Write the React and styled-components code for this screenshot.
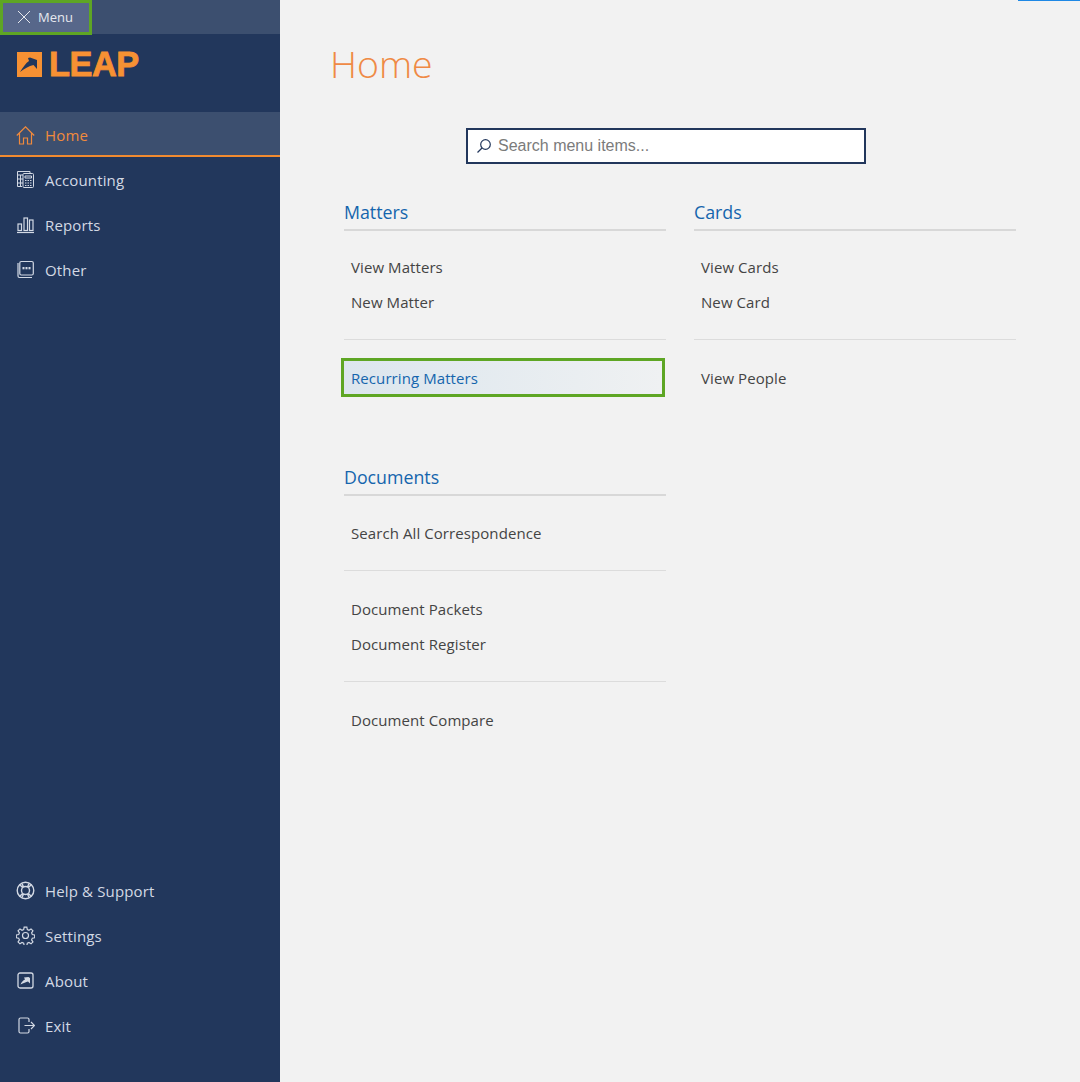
import React from "react";
import styled, { createGlobalStyle } from "styled-components";

const Global = createGlobalStyle`
  html, body { margin: 0; padding: 0; height: 100%; }
  body { background: #f2f2f2; font-family: "Open Sans", "Noto Sans", sans-serif; }
  #root { height: 100%; }
`;

const Page = styled.div`
  position: relative;
  display: flex;
  width: 1080px;
  height: 1082px;
  overflow: hidden;
  background: #f2f2f2;
`;
const Progress = styled.div`
  position: absolute;
  top: 0;
  right: 0;
  width: 62px;
  height: 1px;
  background: #1e88e5;
`;
const Sidebar = styled.aside`
  width: 280px;
  flex: none;
  display: flex;
  flex-direction: column;
  background: #22375c;
  padding-bottom: 34px;
  box-sizing: border-box;
`;
const TopBar = styled.div`
  height: 34px;
  background: #3c4f6f;
  display: flex;
`;
const MenuButton = styled.div`
  width: 92px;
  height: 35px;
  box-sizing: border-box;
  border: 3px solid #5ea624;
  background: #57678a;
  color: #e6e8ee;
  font-size: 13px;
  display: flex;
  align-items: center;
  padding: 0 0 2px 14px;
  gap: 7px;
`;
const Logo = styled.div`
  height: 78px;
  padding: 18px 0 0 17px;
  box-sizing: border-box;
  display: flex;
  align-items: flex-start;
  gap: 7px;
`;
const LogoText = styled.span`
  font-family: "Liberation Sans", sans-serif;
  font-weight: 700;
  font-size: 34.4px;
  line-height: 25px;
  height: 25px;
  color: #f79133;
  -webkit-text-stroke: 0.8px #f79133;
  letter-spacing: -0.5px;
`;
const NavList = styled.nav`
  display: flex;
  flex-direction: column;
  flex: ${(p) => (p.$grow ? 1 : "none")};
`;
const NavItem = styled.a`
  height: 45px;
  box-sizing: border-box;
  display: flex;
  align-items: center;
  padding-left: 16px;
  padding-top: ${(p) => (p.$active ? "3px" : "0")};
  gap: 10px;
  font-size: 15px;
  letter-spacing: 0.15px;
  color: ${(p) => (p.$active ? "#f08a3c" : "#d3d9e4")};
  background: ${(p) => (p.$active ? "#3c4f6f" : "transparent")};
  border-bottom: ${(p) => (p.$active ? "2px solid #f28b30" : "none")};
`;
const IconBox = styled.svg`
  width: 19px;
  height: 19px;
  flex: none;
  fill: none;
  stroke: currentColor;
  stroke-width: ${(p) => p.$stroke ?? 1.2};
`;
const Main = styled.main`
  flex: 1;
  padding: 0 64px;
  box-sizing: border-box;
`;
const Title = styled.h1`
  margin: 39px 0 0 -14px;
  font-size: 37.5px;
  line-height: 50px;
  font-weight: 300;
  color: #ef8a45;
`;
const SearchRow = styled.div`
  display: flex;
  justify-content: center;
  margin: 39px 0 0 -28px;
`;
const SearchBox = styled.div`
  width: 400px;
  height: 36px;
  box-sizing: border-box;
  border: 2px solid #22375c;
  background: #fff;
  display: flex;
  align-items: center;
  padding-left: 8px;
  gap: 6px;
  color: #7b7b7b;
  font-family: "Liberation Sans", sans-serif;
  font-size: 16px;
`;
const Columns = styled.div`
  display: grid;
  grid-template-columns: 322px 322px;
  column-gap: 28px;
  margin-top: 35px;
`;
const Column = styled.div`
  display: flex;
  flex-direction: column;
`;
const Section = styled.section`
  margin-bottom: ${(p) => p.$gap || 0}px;
`;
const SectionTitle = styled.h2`
  margin: 0;
  height: 32px;
  box-sizing: border-box;
  border-bottom: 2px solid #d8d8d8;
  color: #1565ad;
  font-size: 17.8px;
  line-height: 27px;
  font-weight: 400;
`;
const Group = styled.div`
  padding: ${(p) => p.$top ?? 20}px 0 20px;
  border-bottom: ${(p) => (p.$last ? "none" : "1px solid #dcdcdc")};
`;
const Item = styled.a`
  display: flex;
  align-items: center;
  height: ${(p) => (p.$tall ? 39 : 35)}px;
  padding-left: 7px;
  font-size: 15px;
  letter-spacing: 0.08px;
  color: #444;
`;
const FocusItem = styled(Item)`
  box-sizing: border-box;
  margin: 0 1px 0 -3px;
  padding-left: 7px;
  border: 3px solid #5ea624;
  color: #1565ad;
  background: linear-gradient(90deg, #dce6ee, #eff1f2);
`;

const HomeIcon = () => (
  <IconBox viewBox="0 0 19 19">
    <path d="M.8 9.500 9.500.8 18.200 9.500M3.500 7V18h4v-6h4v6h4V7" />
  </IconBox>
);
const CalcIcon = () => (
  <IconBox viewBox="0 0 19 19" $stroke={1}>
    <path d="M14 3V1.500H1.500v15H6M1.500 5H7M1.500 9H7M1.500 13H7M4.500 5v11" />
    <rect x="7" y="3.500" width="10.500" height="14" rx="1" />
    <path d="M9 6h6.500v2H9zM9 10.500h1.500M11.500 10.500H13M14 10.500h1.500M9 13h1.500M11.500 13H13M14 13h1.500M9 15.500h1.500M11.500 15.500H13M14 15.500h1.500" />
  </IconBox>
);
const BarsIcon = () => (
  <IconBox viewBox="0 0 19 19">
    <path d="M1 17.500h17" />
    <rect x="2" y="9" width="3.500" height="6.500" />
    <rect x="8" y="3" width="3.500" height="12.500" />
    <rect x="13.500" y="5" width="3.500" height="10.500" />
  </IconBox>
);
const OtherIcon = () => (
  <IconBox viewBox="0 0 19 19">
    <path d="M2 3v13c0 1 .5 1.500 1.500 1.500H16" />
    <rect x="3.800" y="1.500" width="13.500" height="13.500" rx="1.500" />
    <rect x="6.500" y="7" width="2" height="2.300" fill="currentColor" stroke="none" />
    <rect x="9.500" y="7" width="2" height="2.300" fill="currentColor" stroke="none" />
    <rect x="12.500" y="7" width="2" height="2.300" fill="currentColor" stroke="none" />
  </IconBox>
);
const HelpIcon = () => (
  <IconBox viewBox="0 0 19 19" $stroke={1.4}>
    <circle cx="9.500" cy="9.500" r="8.300" />
    <circle cx="9.500" cy="9.500" r="4" />
    <path d="M3.600 3.600l3 3M15.400 3.600l-3 3M3.600 15.400l3-3M15.400 15.400l-3-3M6 2.400l1.500 3.700M13 2.400l-1.500 3.700M6 16.600l1.500-3.700M13 16.600l-1.500-3.700" />
  </IconBox>
);
const GearIcon = () => (
  <IconBox viewBox="0 0 24 24" $stroke={1.5}>
    <path d="M10.300 1.500h3.400l.6 3 2.100.9 2.600-1.700 2.400 2.400-1.700 2.600.9 2.100 3 .6v3.400l-3 .6-.9 2.100 1.700 2.600-2.400 2.400-2.600-1.700-2.100.9-.6 3h-3.400l-.6-3-2.100-.9-2.600 1.700-2.400-2.400 1.700-2.600-.9-2.100-3-.6v-3.400l3-.6.9-2.100-1.700-2.600 2.400-2.400 2.600 1.700 2.100-.9z" />
    <circle cx="12" cy="12" r="3.800" />
  </IconBox>
);
const AboutIcon = () => (
  <IconBox viewBox="0 0 19 19" $stroke={1.3}>
    <rect x="2" y="2" width="15" height="15" rx="2" />
    <path d="M4.500 13.500c1-2.500 2.500-4 4.500-5L8 6.500l4.500-.5 1.500 1v5.500L12 10.500c-2 .6-4.500 1.700-7.500 3z" fill="currentColor" stroke="none" />
  </IconBox>
);
const ExitIcon = () => (
  <IconBox viewBox="0 0 19 19">
    <path d="M13 6V3.500C13 2.500 12.500 2 11.500 2h-7C3.500 2 3 2.500 3 3.500v12c0 1 .5 1.500 1.500 1.500h7c1 0 1.500-.5 1.500-1.500V13M8.500 9.500h10M15 6l3.500 3.500L15 13" />
  </IconBox>
);
const LogoMark = () => (
  <svg width="25" height="25" viewBox="0 0 25 25">
    <rect width="25" height="25" fill="#f79133" />
    <path d="M3 20C6 15 9 11 12 9L11 6 13 5.500 20 8V17L16.500 13C12 14 7 17 3 20z" fill="#22375c" />
  </svg>
);

const topNav = [
  ["Home", HomeIcon, true],
  ["Accounting", CalcIcon],
  ["Reports", BarsIcon],
  ["Other", OtherIcon],
];
const bottomNav = [
  ["Help & Support", HelpIcon],
  ["Settings", GearIcon],
  ["About", AboutIcon],
  ["Exit", ExitIcon],
];

export default function App() {
  return (
    <Page>
      <Global />
      <Progress />
      <Sidebar>
        <TopBar>
          <MenuButton>
            <svg width="14" height="14" viewBox="0 0 14 14" stroke="currentColor" fill="none">
              <path d="M1 1l12 12M13 1 1 13" />
            </svg>
            Menu
          </MenuButton>
        </TopBar>
        <Logo>
          <LogoMark />
          <LogoText>LEAP</LogoText>
        </Logo>
        <NavList $grow>
          {topNav.map(([label, Icon, active]) => (
            <NavItem key={label} $active={active}>
              <Icon />
              {label}
            </NavItem>
          ))}
        </NavList>
        <NavList>
          {bottomNav.map(([label, Icon]) => (
            <NavItem key={label}>
              <Icon />
              {label}
            </NavItem>
          ))}
        </NavList>
      </Sidebar>
      <Main>
        <Title>Home</Title>
        <SearchRow>
          <SearchBox>
            <svg width="16" height="16" viewBox="0 0 16 16" fill="none" stroke="#22375c" strokeWidth="1.200">
              <circle cx="9.500" cy="6.500" r="4.800" />
              <path d="M6 10 1.500 14.500" />
            </svg>
            Search menu items...
          </SearchBox>
        </SearchRow>
        <Columns>
          <Column>
            <Section $gap={47}>
              <SectionTitle>Matters</SectionTitle>
              <Group $top={18}>
                <Item>View Matters</Item>
                <Item>New Matter</Item>
              </Group>
              <Group $top={18} $last>
                <FocusItem $tall>Recurring Matters</FocusItem>
              </Group>
            </Section>
            <Section>
              <SectionTitle>Documents</SectionTitle>
              <Group $top={19}>
                <Item>Search All Correspondence</Item>
              </Group>
              <Group>
                <Item>Document Packets</Item>
                <Item>Document Register</Item>
              </Group>
              <Group $last>
                <Item>Document Compare</Item>
              </Group>
            </Section>
          </Column>
          <Column>
            <Section>
              <SectionTitle>Cards</SectionTitle>
              <Group $top={18}>
                <Item>View Cards</Item>
                <Item>New Card</Item>
              </Group>
              <Group $top={18} $last>
                <Item $tall>View People</Item>
              </Group>
            </Section>
          </Column>
        </Columns>
      </Main>
    </Page>
  );
}
